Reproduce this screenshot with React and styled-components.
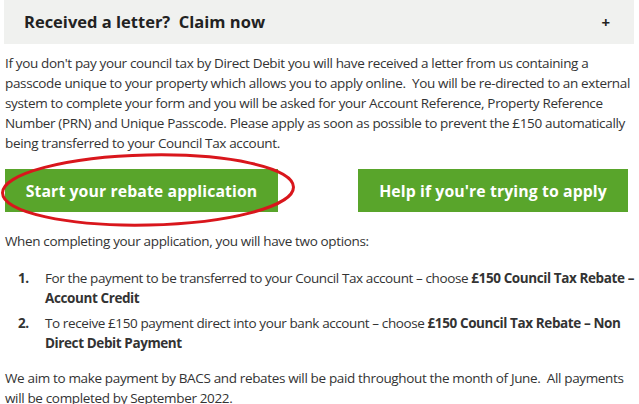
import React from 'react'
import styled, { createGlobalStyle } from 'styled-components'

const Global = createGlobalStyle`
    body {
        margin: 0;
        background: #fff;
    }
`

const Page = styled.div`
    font-family: "Open Sans", "Liberation Sans", sans-serif;
    font-size: 13.5px;
    line-height: 20px;
    letter-spacing: -0.35px;
    color: #333;
    width: 639px;
`

const AccordionHeader = styled.div`
    margin: 0 5px 0 4px;
    height: 44px;
    background: #f0f1ef;
    display: flex;
    align-items: center;
    justify-content: space-between;
    padding: 0 24px 0 20px;
    font-size: 16.5px;
    letter-spacing: 0;
    font-weight: 700;
    color: #222;
`

const Plus = styled.span`
    font-size: 15px;
    font-weight: 700;
`

const Content = styled.div`
    padding: 0 1px 0 5px;
`

const Para = styled.p`
    margin: ${p => p.top}px 0 0;
`

const ButtonRow = styled.div`
    display: flex;
    justify-content: space-between;
    margin-top: 16px;
    padding-right: 10px;
`

const ButtonWrap = styled.div`
    position: relative;
`

const GreenButton = styled.a`
    display: flex;
    align-items: center;
    justify-content: center;
    width: ${p => p.w}px;
    height: 43px;
    background: #59a52b;
    color: #fff;
    font-weight: 700;
    font-size: 15.8px;
    text-decoration: none;
    letter-spacing: 0.1px;
`

const Ring = styled.svg`
    position: absolute;
    left: -5px;
    top: -16px;
    pointer-events: none;
`

const List = styled.ol`
    margin: 17px 0 0;
    padding: 0;
    list-style: none;
    letter-spacing: -0.4px;
`

const Item = styled.li`
    display: flex;
    margin-top: ${p => p.first ? 0 : 5}px;
`

const Num = styled.span`
    flex: 0 0 27px;
    margin-left: 13px;
    font-weight: 700;
`

const ItemText = styled.span`
    flex: 1;
`

export default function App() {
    return (
        <Page>
            <Global />
            <AccordionHeader>
                <span>Received a letter?&nbsp; Claim now</span>
                <Plus>+</Plus>
            </AccordionHeader>
            <Content>
                <Para top={9}>
                    If you don't pay your council tax by Direct Debit you will have received a letter from us containing a
                    passcode unique to your property which allows you to apply online.&nbsp; You will be re-directed to an external
                    system to complete your form and you will be asked for your Account Reference, Property Reference
                    Number (PRN) and Unique Passcode. Please apply as soon as possible to prevent the £150 automatically
                    being transferred to your Council Tax account.
                </Para>
                <ButtonRow>
                    <ButtonWrap>
                        <GreenButton w={273}>Start your rebate application</GreenButton>
                        <Ring width="298" height="76" viewBox="0 0 298 76">
                            <ellipse cx="148" cy="37" rx="145.5" ry="35" fill="none" stroke="#d9161c" strokeWidth="3" transform="rotate(-1.2 148 37)" />
                        </Ring>
                    </ButtonWrap>
                    <GreenButton w={270}>Help if you're trying to apply</GreenButton>
                </ButtonRow>
                <Para top={19}>When completing your application, you will have two options:</Para>
                <List>
                    <Item first>
                        <Num>1.</Num>
                        <ItemText>For the payment to be transferred to your Council Tax account – choose <b>£150 Council Tax Rebate – Account Credit</b></ItemText>
                    </Item>
                    <Item>
                        <Num>2.</Num>
                        <ItemText>To receive £150 payment direct into your bank account – choose <b>£150 Council Tax Rebate – Non Direct Debit Payment</b></ItemText>
                    </Item>
                </List>
                <Para top={15}>
                    We aim to make payment by BACS and rebates will be paid throughout the month of June.&nbsp; All payments
                    will be completed by September 2022.
                </Para>
            </Content>
        </Page>
    )
}
